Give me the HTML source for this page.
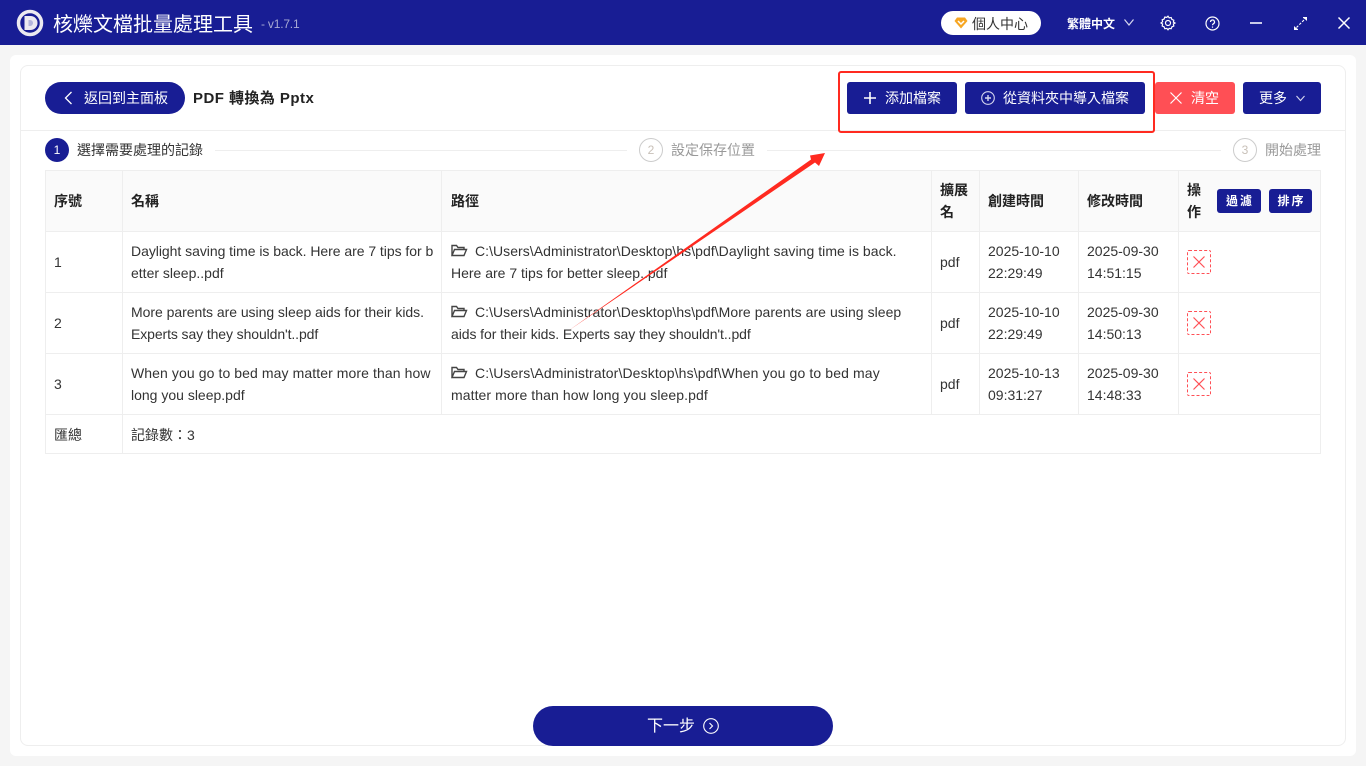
<!DOCTYPE html>
<html lang="zh-Hant"><head><meta charset="utf-8"><title>核爍文檔批量處理工具</title>
<style>
*{box-sizing:border-box}
html,body{margin:0;padding:0;width:1366px;height:766px;overflow:hidden;background:#f5f5f5}
body{position:relative;font-family:"Liberation Sans","Noto Sans CJK TC",sans-serif;color:#333;font-size:14px}
.a{position:absolute;white-space:nowrap}
.btn{position:absolute;background:#181d94;color:#fff;border-radius:3px;height:32px;top:82px;line-height:32px;font-size:14px;white-space:nowrap}
.l{position:absolute;background:#eee}
.c{position:absolute;white-space:nowrap;font-size:14px;line-height:22px;color:#333}
.h{font-weight:700;color:#222}
.mini{position:absolute;top:189px;height:24px;background:#181d94;border-radius:3px;color:#fff;font-size:12px;line-height:24px;text-align:center;font-weight:700;letter-spacing:2px;padding-left:2px}
.del{position:absolute;left:1187px;width:24px;height:24px;border:1px dashed #ff4f55;border-radius:2px}
svg{position:absolute;overflow:visible}
</style></head><body>
<div class="a" style="left:0;top:0;width:1366px;height:45px;background:#181d94"></div>
<svg style="left:16px;top:9px" width="28" height="28" viewBox="0 0 28 28"><circle cx="14" cy="14" r="11.5" fill="#181d94" stroke="#eceaf0" stroke-width="3.5"/><path d="M8.500 7h6a7 7 0 0 1 0 14h-6z" fill="#eceaf0"/><path d="M12.500 11h1.500a3 3 0 0 1 0 6h-1.500z" fill="#b4b6dc"/></svg>
<div class="a" style="left:53px;top:12px;font-size:20px;line-height:26px;color:#fff">核爍文檔批量處理工具</div>
<div class="a" style="left:261px;top:16px;font-size:12px;line-height:16px;color:#a8aad4;letter-spacing:-.2px">- v1.7.1</div>

<div class="a" style="left:941px;top:11px;width:100px;height:24px;background:#fff;border-radius:12px"></div>
<svg style="left:954px;top:17px" width="14" height="12" viewBox="0 0 14 12"><path d="M3 .5h8L13.500 4 7 11.500.5 4z" fill="#f6a623"/><path d="M4 4l3 3 3-3" fill="none" stroke="#fff" stroke-width="1.500"/></svg>
<div class="a" style="left:972px;top:14px;font-size:14px;line-height:20px;color:#333">個人中心</div>
<div class="a" style="left:1067px;top:15px;font-size:12px;line-height:18px;color:#fff;font-weight:700">繁體中文</div>
<svg style="left:1123px;top:18px" width="12" height="9" fill="none" stroke="#d5d6ee" stroke-width="1.200"><path d="M1.500 1.500L6 7l4.500-5.500"/></svg>
<svg style="left:1160px;top:15px" width="16" height="16" viewBox="0 0 16 16" fill="none" stroke="#fff" stroke-width="1.200"><path d="M8 1.200l1.200 1.600 2-.3.700 1.900 1.900.8-.4 2L15 8l-1.600 1 .4 2-1.900.8-.7 1.900-2-.3L8 14.800l-1.200-1.400-2 .3-.7-1.900-1.900-.8.400-2L1 8l1.600-1.200-.4-2 1.900-.8.700-1.900 2 .3z"/><circle cx="8" cy="8" r="2.500"/></svg>
<svg style="left:1205px;top:16px" width="15" height="15" viewBox="0 0 15 15" fill="none" stroke="#fff" stroke-width="1.200"><circle cx="7.500" cy="7.500" r="6.500"/><path d="M5.500 6a2 2 0 1 1 3 1.700c-.7.400-1 .8-1 1.600"/><path d="M7.500 10.500v1.200"/></svg>
<div class="a" style="left:1250px;top:22px;width:12px;height:2px;background:#c9cbe9"></div>
<svg style="left:1294px;top:17px" width="13" height="13" viewBox="0 0 13 13" fill="#fff"><path d="M9 0h4v4l-1.300-1.300L9 .9zM0 13V9l1.300 1.300L4 12.100 4 13z"/><path d="M2.500 10.500l8-8" stroke="#fff" stroke-width="1.100" stroke-dasharray="2.500 1.500"/></svg>
<svg style="left:1338px;top:17px" width="12" height="12" fill="none" stroke="#fff" stroke-width="1.500"><path d="M.5.5l11 11M11.500.5l-11 11"/></svg>

<div class="a" style="left:10px;top:55px;width:1346px;height:701px;background:#fff;border-radius:6px"></div>
<div class="a" style="left:20px;top:65px;width:1326px;height:681px;border:1px solid #eee;border-radius:8px"></div>
<div class="l" style="left:21px;top:130px;width:1324px;height:1px"></div>

<div class="a" style="left:45px;top:82px;width:140px;height:32px;background:#181d94;border-radius:16px"></div>
<svg style="left:64px;top:91px" width="9" height="14" fill="none" stroke="#fff" stroke-width="1.300"><path d="M7.500 1L1.500 7l6 6"/></svg>
<div class="a" style="left:84px;top:88px;font-size:14px;line-height:20px;color:#fff">返回到主面板</div>
<div class="a" style="left:193px;top:89px;font-size:15px;line-height:20px;color:#222;font-weight:700;letter-spacing:.45px">PDF 轉換為 Pptx</div>

<div class="btn" style="left:847px;width:110px;padding-left:38px">添加檔案</div>
<svg style="left:864px;top:92px" width="12" height="12" stroke="#fff" stroke-width="1.600"><path d="M6 0v12M0 6h12"/></svg>
<div class="btn" style="left:965px;width:180px;padding-left:38px">從資料夾中導入檔案</div>
<svg style="left:981px;top:91px" width="14" height="14" fill="none" stroke="#d5d6ee" stroke-width="1.100"><circle cx="7" cy="7" r="6.300"/><path d="M7 4v6M4 7h6" stroke-width="1.400"/></svg>
<div class="btn" style="left:1155px;width:80px;padding-left:36px;background:#ff4f55">清空</div>
<svg style="left:1170px;top:92px" width="12" height="12" fill="none" stroke="#fff" stroke-width="1.200"><path d="M.5.5l11 11M11.500.5l-11 11"/></svg>
<div class="btn" style="left:1243px;width:78px;padding-left:16px">更多</div>
<svg style="left:1296px;top:95px" width="9" height="7" fill="none" stroke="#d5d6ee" stroke-width="1.100"><path d="M.5 1L4.500 5.500 8.500 1"/></svg>

<div class="a" style="left:838px;top:71px;width:317px;height:62px;border:2px solid #ff2a20;border-radius:3px"></div>

<div class="a" style="left:45px;top:138px;width:24px;height:24px;border-radius:50%;background:#181d94;color:#fff;text-align:center;font-size:12px;line-height:24px">1</div>
<div class="a" style="left:77px;top:140px;font-size:14px;line-height:20px;color:#333">選擇需要處理的記錄</div>
<div class="l" style="left:215px;top:150px;width:412px;height:1px"></div>
<div class="a" style="left:639px;top:138px;width:24px;height:24px;border-radius:50%;border:1px solid #ccc;color:#c8c0b8;text-align:center;font-size:12px;line-height:22px">2</div>
<div class="a" style="left:671px;top:140px;font-size:14px;line-height:20px;color:#999">設定保存位置</div>
<div class="l" style="left:767px;top:150px;width:454px;height:1px"></div>
<div class="a" style="left:1233px;top:138px;width:24px;height:24px;border-radius:50%;border:1px solid #ccc;color:#c8c0b8;text-align:center;font-size:12px;line-height:22px">3</div>
<div class="a" style="left:1265px;top:140px;font-size:14px;line-height:20px;color:#999">開始處理</div>

<div class="a" style="left:45px;top:170px;width:1276px;height:61px;background:#fafafa"></div>
<div class="l" style="left:45px;top:170px;width:1276px;height:1px"></div>
<div class="l" style="left:45px;top:231px;width:1276px;height:1px"></div>
<div class="l" style="left:45px;top:292px;width:1276px;height:1px"></div>
<div class="l" style="left:45px;top:353px;width:1276px;height:1px"></div>
<div class="l" style="left:45px;top:414px;width:1276px;height:1px"></div>
<div class="l" style="left:45px;top:453px;width:1276px;height:1px"></div>
<div class="l" style="left:45px;top:170px;width:1px;height:284px"></div>
<div class="l" style="left:122px;top:170px;width:1px;height:284px"></div>
<div class="l" style="left:441px;top:170px;width:1px;height:245px"></div>
<div class="l" style="left:931px;top:170px;width:1px;height:245px"></div>
<div class="l" style="left:979px;top:170px;width:1px;height:245px"></div>
<div class="l" style="left:1078px;top:170px;width:1px;height:245px"></div>
<div class="l" style="left:1178px;top:170px;width:1px;height:245px"></div>
<div class="l" style="left:1320px;top:170px;width:1px;height:284px"></div>

<div class="c h" style="left:54px;top:190px">序號</div>
<div class="c h" style="left:131px;top:190px">名稱</div>
<div class="c h" style="left:451px;top:190px">路徑</div>
<div class="c h" style="left:940px;top:179px">擴展<br>名</div>
<div class="c h" style="left:988px;top:190px">創建時間</div>
<div class="c h" style="left:1087px;top:190px">修改時間</div>
<div class="c h" style="left:1187px;top:179px">操<br>作</div>
<div class="mini" style="left:1217px;width:44px">過濾</div>
<div class="mini" style="left:1269px;width:43px">排序</div>

<div class="c" style="left:54px;top:251px">1</div>
<div class="c" style="left:131px;top:240px"><span style="letter-spacing:-.04px">Daylight saving time is back. Here are 7 tips for b</span><br>etter sleep..pdf</div>
<div class="c" style="left:475px;top:240px;letter-spacing:.045px">C:\Users\Administrator\Desktop\hs\pdf\Daylight saving time is back.</div>
<div class="c" style="left:451px;top:262px">Here are 7 tips for better sleep..pdf</div>
<div class="c" style="left:940px;top:251px">pdf</div>
<div class="c" style="left:988px;top:240px">2025-10-10<br>22:29:49</div>
<div class="c" style="left:1087px;top:240px">2025-09-30<br>14:51:15</div>

<div class="c" style="left:54px;top:312px">2</div>
<div class="c" style="left:131px;top:301px"><span style="letter-spacing:-.04px">More parents are using sleep aids for their kids.</span><br><span style="letter-spacing:-.1px">Experts say they shouldn't..pdf</span></div>
<div class="c" style="left:475px;top:301px;letter-spacing:.045px">C:\Users\Administrator\Desktop\hs\pdf\More parents are using sleep</div>
<div class="c" style="left:451px;top:323px;letter-spacing:-.08px">aids for their kids. Experts say they shouldn't..pdf</div>
<div class="c" style="left:940px;top:312px">pdf</div>
<div class="c" style="left:988px;top:301px">2025-10-10<br>22:29:49</div>
<div class="c" style="left:1087px;top:301px">2025-09-30<br>14:50:13</div>

<div class="c" style="left:54px;top:373px">3</div>
<div class="c" style="left:131px;top:362px"><span style="letter-spacing:.09px">When you go to bed may matter more than how</span><br>long you sleep.pdf</div>
<div class="c" style="left:475px;top:362px;letter-spacing:.12px">C:\Users\Administrator\Desktop\hs\pdf\When you go to bed may</div>
<div class="c" style="left:451px;top:384px;letter-spacing:.08px">matter more than how long you sleep.pdf</div>
<div class="c" style="left:940px;top:373px">pdf</div>
<div class="c" style="left:988px;top:362px">2025-10-13<br>09:31:27</div>
<div class="c" style="left:1087px;top:362px">2025-09-30<br>14:48:33</div>

<svg style="left:451px;top:244px" width="16" height="13" fill="none" stroke="#444" stroke-width="1.400"><path d="M1 11.500V1.500h4.500l1.500 2h6v2M1 11.500l2.500-6h12l-2.500 6z"/></svg>
<svg style="left:451px;top:305px" width="16" height="13" fill="none" stroke="#444" stroke-width="1.400"><path d="M1 11.500V1.500h4.500l1.500 2h6v2M1 11.500l2.500-6h12l-2.500 6z"/></svg>
<svg style="left:451px;top:366px" width="16" height="13" fill="none" stroke="#444" stroke-width="1.400"><path d="M1 11.500V1.500h4.500l1.500 2h6v2M1 11.500l2.500-6h12l-2.500 6z"/></svg>

<div class="del" style="top:250px"></div>
<svg style="left:1193px;top:256px" width="12" height="12" fill="none" stroke="#ff4f55" stroke-width="1.200"><path d="M.5.5l11 11M11.500.5l-11 11"/></svg>
<div class="del" style="top:311px"></div>
<svg style="left:1193px;top:317px" width="12" height="12" fill="none" stroke="#ff4f55" stroke-width="1.200"><path d="M.5.5l11 11M11.500.5l-11 11"/></svg>
<div class="del" style="top:372px"></div>
<svg style="left:1193px;top:378px" width="12" height="12" fill="none" stroke="#ff4f55" stroke-width="1.200"><path d="M.5.5l11 11M11.500.5l-11 11"/></svg>

<div class="c" style="left:54px;top:424px">匯總</div>
<div class="c" style="left:131px;top:424px">記錄數：3</div>

<svg style="left:0;top:0" width="1366" height="766"><path d="M568 331L811 159.500 810 155.500 825 153 819 166 815 162.500z" fill="#ff2a20"/></svg>

<div class="a" style="left:533px;top:706px;width:300px;height:40px;background:#181d94;border-radius:20px"></div>
<div class="a" style="left:647px;top:716px;font-size:16px;line-height:22px;color:#fff">下一步</div>
<svg style="left:703px;top:718px" width="16" height="16" fill="none" stroke="#fff" stroke-width="1.100"><circle cx="8" cy="8" r="7.300"/><path d="M6.500 5L9.500 8l-3 3"/></svg>
</body></html>
